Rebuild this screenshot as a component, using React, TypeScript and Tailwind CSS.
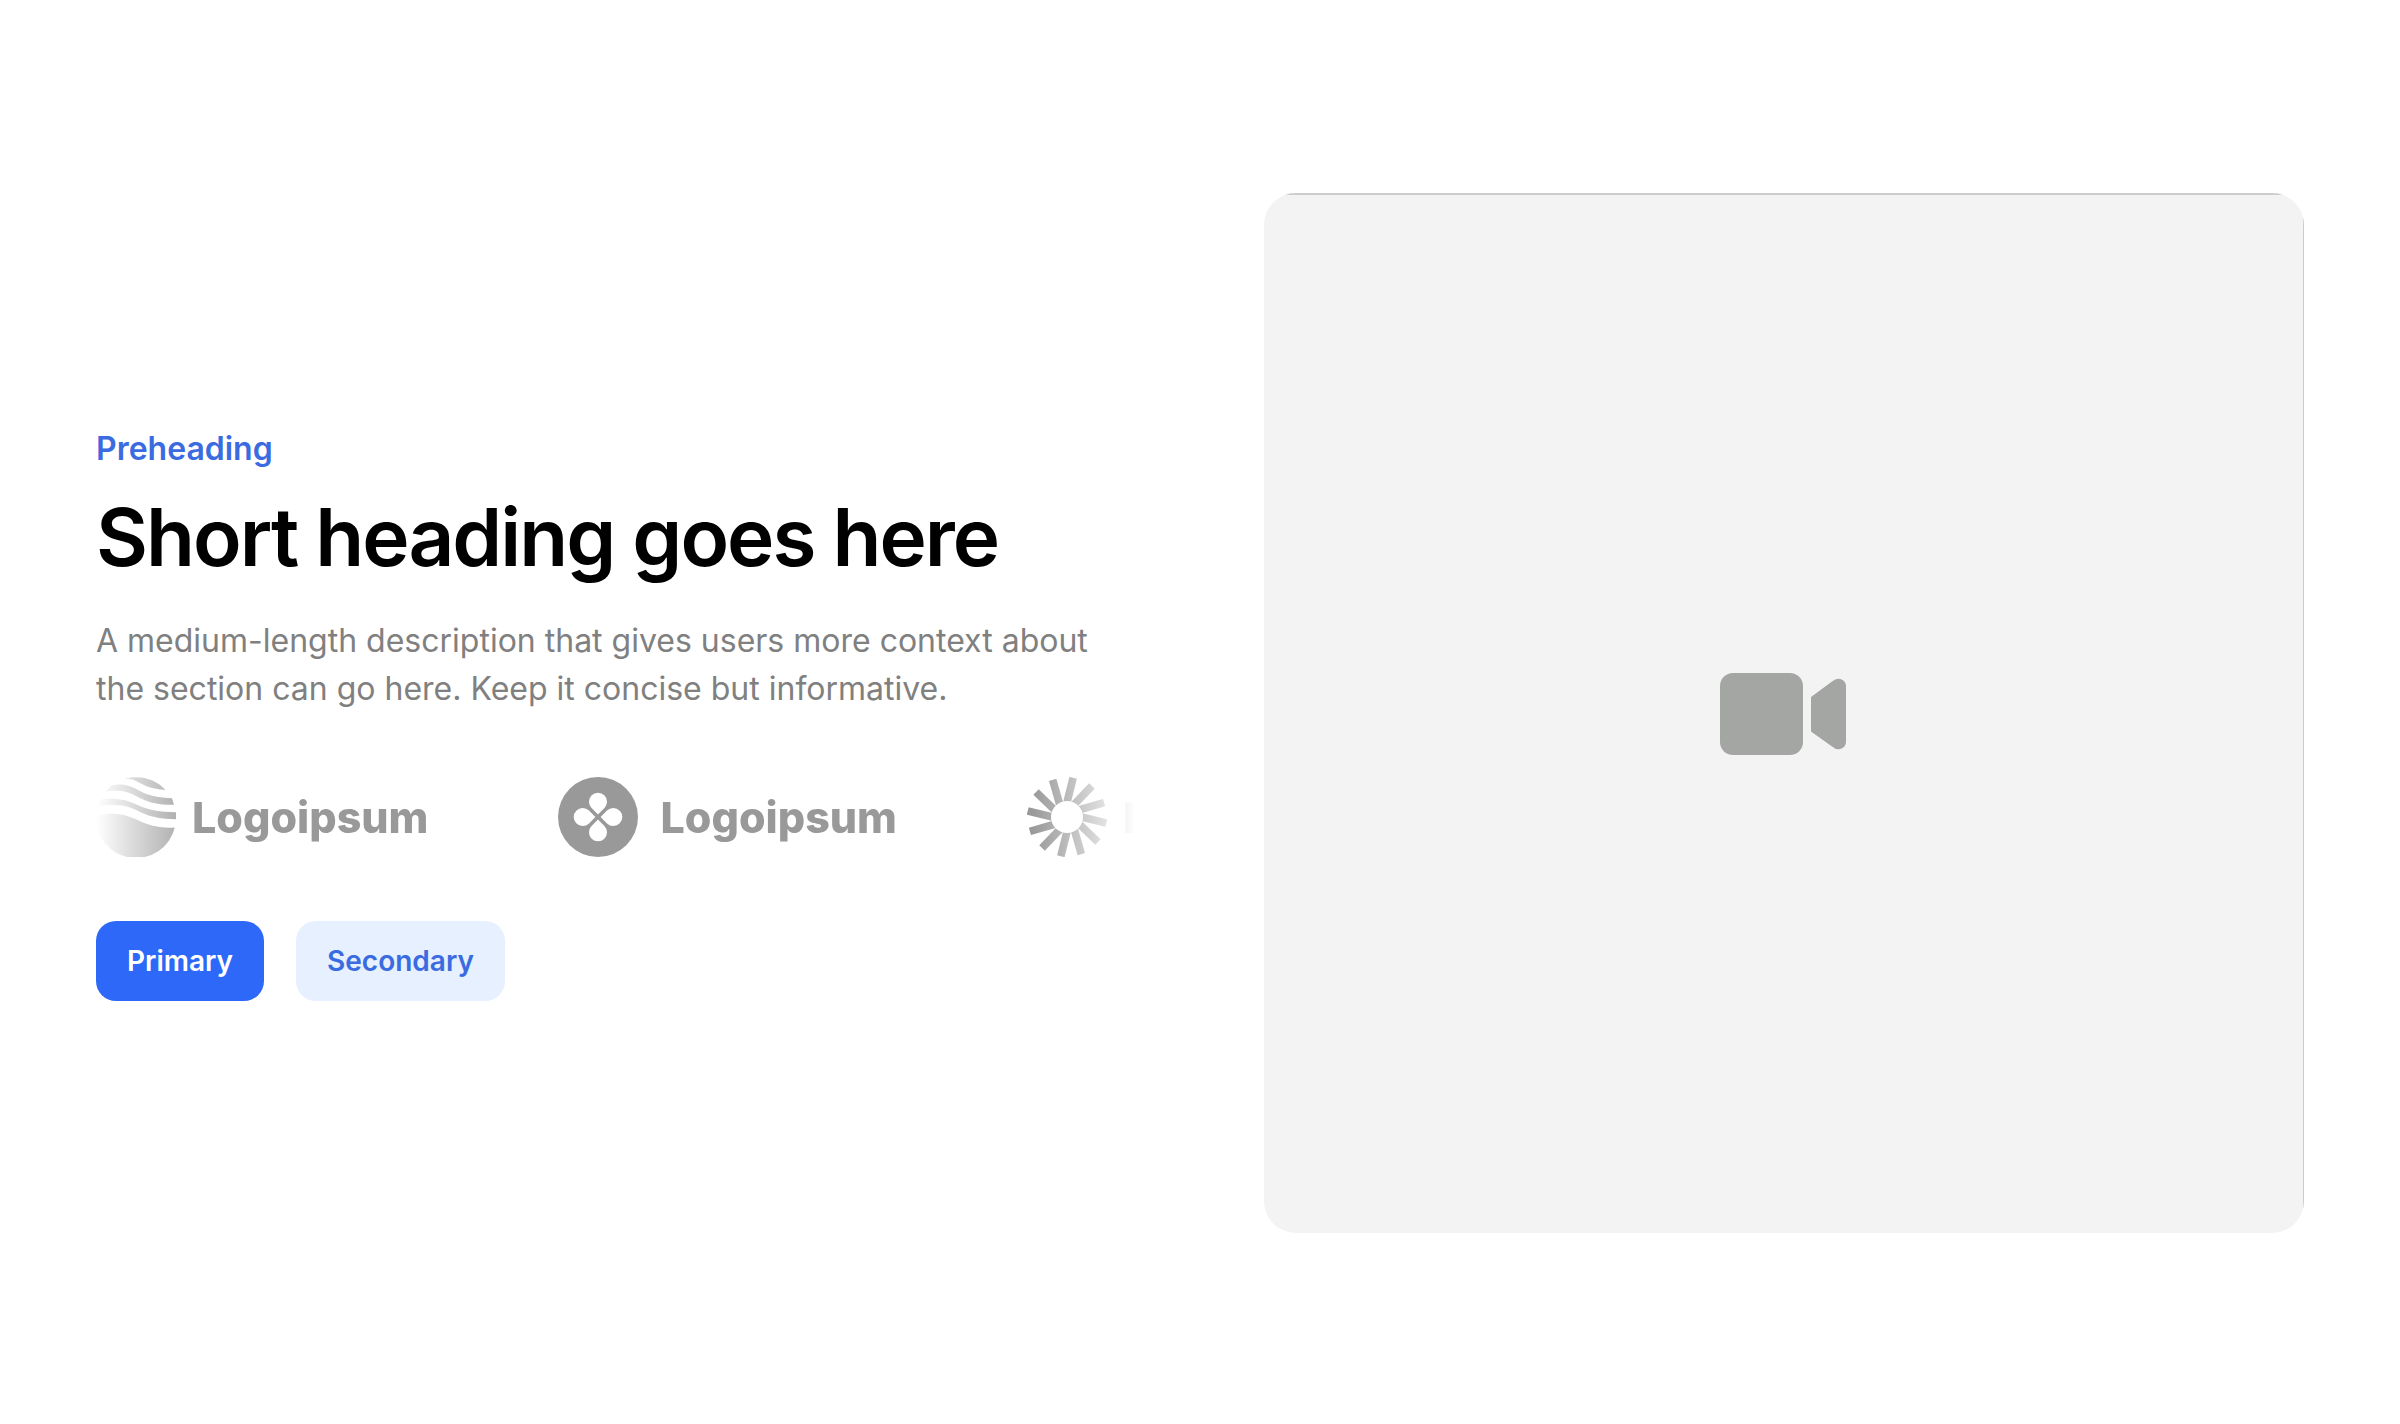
interface LogoProps {
  icon: React.ReactNode;
  className?: string;
}

function WavesIcon() {
  return (
    <svg className="size-20 shrink-0" viewBox="0 0 80 80" fill="currentColor" aria-hidden="true">
      <path d="M28.500 1.700C44 -2.500 60 2 69.500 13C60 12.500 52 10.500 45 6.500C40 3.500 36 1.200 28.500 1.700Z" />
      <path d="M15.500 8.500C27 6 35 9 43 13.500C53 19 63 20.500 76 21.200L78 27.800C64 28 54 26 45 21.500C34 15.500 28 12 9.500 14.500Z" />
      <path d="M4.500 22.500C20 20.500 31 23 41 27.800C53 33.500 64 35 80 35.300V42.200C65 42 55 40 45 35.500C33 29.500 26 26 1.200 29.500Z" />
      <path d="M0 38.800C19 34.500 30 38 41 42.800C52 48 62 51.500 78.800 50.500A40 40 0 0 1 0 38.800Z" />
    </svg>
  );
}

function CloverIcon() {
  return (
    <svg className="size-20 shrink-0" viewBox="-40 -40 80 80" aria-hidden="true">
      <circle r="40" fill="currentColor" />
      {[0, 90, 180, 270].map((angle) => (
        <path key={angle} d="M0 -2.6L-6.4 -9A9 9 0 1 1 6.4 -9Z" fill="white" transform={`rotate(${angle})`} />
      ))}
    </svg>
  );
}

function BurstIcon() {
  return (
    <svg className="size-20 shrink-0" viewBox="-40 -40 80 80" aria-hidden="true">
      {Array.from({ length: 12 }, (_, i) => (
        <path key={i} d="M-7.4 -39.6H0.3V-14H-7.4Z" fill="currentColor" transform={`rotate(${14 + i * 30})`} />
      ))}
      <circle r="16" fill="white" />
    </svg>
  );
}

function Logo({ icon, className = 'gap-4' }: LogoProps) {
  return (
    <li className={`flex shrink-0 items-center ${className}`}>
      {icon}
      <span className="text-[43px] leading-none font-extrabold">Logoipsum</span>
    </li>
  );
}

export default function App() {
  return (
    <section className="grid min-h-screen grid-cols-2 items-center gap-32 bg-white px-24 pt-[98px] pb-24 font-['Inter',sans-serif]">
      <div className="min-w-0">
        <p className="mb-4 text-[32px] leading-12 font-semibold text-[#3a6be0]">Preheading</p>
        <h1 className="mb-8 text-[80px] leading-24 font-semibold tracking-tight text-black">Short heading goes here</h1>
        <p className="mb-16 text-[32px] leading-12 text-[#808080]">
          A medium-length description that gives users more context about the section can go here. Keep it concise but
          informative.
        </p>
        <ul className="mb-16 flex gap-[130px] overflow-hidden text-[#999999] [mask-image:linear-gradient(to_right,transparent,black_10%,black_90%,transparent)]">
          <Logo icon={<WavesIcon />} />
          <Logo icon={<CloverIcon />} className="gap-[22px]" />
          <Logo icon={<BurstIcon />} />
        </ul>
        <div className="flex gap-8">
          <button type="button" className="h-20 rounded-[20px] bg-[#2d68f8] px-[31px] text-[28px] font-semibold text-white">
            Primary
          </button>
          <button type="button" className="h-20 rounded-[20px] bg-[#e6f0fe] px-[31px] text-[28px] font-semibold text-[#3a6be0]">
            Secondary
          </button>
        </div>
      </div>

      <div className="aspect-square overflow-hidden rounded-[32px] bg-[#f3f3f3]">
        <div className="flex size-full items-center justify-center border-t-2 border-r border-[#cccccc]">
          <svg className="h-21 w-32" viewBox="0 0 128 84" fill="#a4a6a3" role="img" aria-label="Video">
            <rect x="0" y="1" width="83" height="82" rx="13" />
            <path d="M91 25L112 9.5Q116 6 120.500 7Q126 9 126 14V70Q126 75 120.500 77Q116 78 112 74.500L91 59.500Z" />
          </svg>
        </div>
      </div>
    </section>
  );
}
